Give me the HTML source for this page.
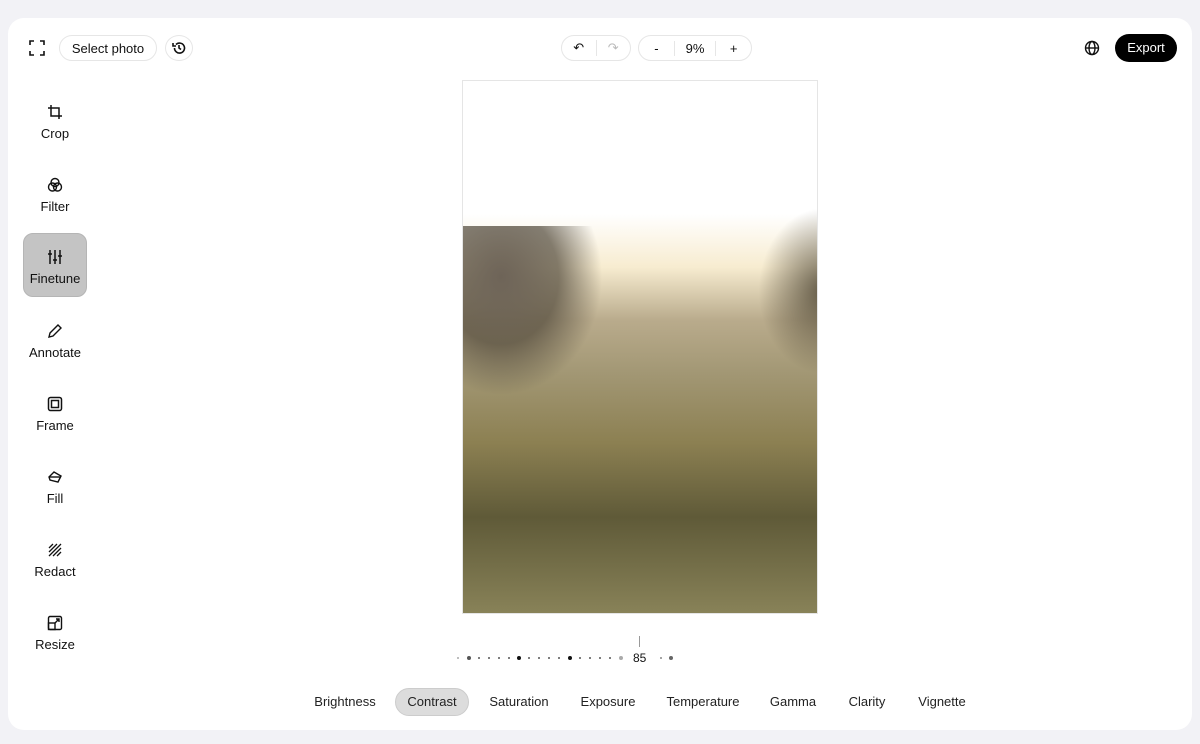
<!DOCTYPE html><html><head><style>
body{margin:0;width:1200px;height:744px;background:#f2f2f6;font-family:"Liberation Sans",sans-serif;position:relative;overflow:hidden;color:#111}
.card{position:absolute;left:8px;top:18px;width:1184px;height:712px;background:#fff;border-radius:16px}
.a{position:absolute}
.pill{position:absolute;border:1px solid #e6e6e6;border-radius:14px;height:26px;box-sizing:border-box;font-size:13px;display:flex;align-items:center;justify-content:center}
.tool{position:absolute;left:23px;width:64px;height:64px;text-align:center;font-size:13px;border-radius:10px}
.tool svg{display:block;margin:16px auto 6px}
.tab{position:absolute;top:688px;height:28px;line-height:28px;font-size:13px;color:#222;text-align:center}
.dot{position:absolute;border-radius:50%;background:#333}
.sd{position:absolute;top:657px;width:2px;height:2px;border-radius:50%;background:#555}
</style></head><body>
<div class="card"></div>
<svg class="a" style="left:29px;top:40px" width="16" height="16" fill="none" stroke="#111" stroke-width="1.6"><path d="M1 5V1h4M11 1h4v4M15 11v4h-4M5 15H1v-4"/></svg>
<div class="pill" style="left:59px;top:35px;width:98px">Select photo</div>
<div class="pill" style="left:165px;top:35px;width:28px;border-radius:50%"><svg width="14" height="14" fill="none" stroke="#111" stroke-width="1.6"><path d="M2.5 7a5 5 0 1 0 1.5-3.5"/><path d="M1 2v3h3" /><path d="M7 4v3l2 1.5"/></svg></div>
<div class="pill" style="left:561px;top:35px;width:70px"><span style="width:35px;text-align:center;border-right:1px solid #e6e6e6">↶</span><span style="width:35px;text-align:center;color:#bbb">↷</span></div>
<div class="pill" style="left:638px;top:35px;width:114px"><span style="width:36px;text-align:center;border-right:1px solid #e6e6e6">-</span><span style="width:42px;text-align:center;border-right:1px solid #e6e6e6">9%</span><span style="width:36px;text-align:center">+</span></div>
<svg class="a" style="left:1084px;top:40px" width="16" height="16" fill="none" stroke="#111" stroke-width="1.4"><circle cx="8" cy="8" r="6.5"/><ellipse cx="8" cy="8" rx="3" ry="6.5"/><path d="M1.5 8h13"/></svg>
<div class="a" style="left:1115px;top:34px;width:62px;height:28px;background:#000;color:#fff;border-radius:14px;font-size:13px;text-align:center;line-height:28px">Export</div>

<div class="tool" style="top:88px"><svg width="16" height="16" fill="none" stroke="#111" stroke-width="1.5"><path d="M4 1v11h11M1 4h11v11"/></svg>Crop</div>
<div class="tool" style="top:161px"><svg width="16" height="16" fill="none" stroke="#111" stroke-width="1.4"><circle cx="8" cy="5.5" r="4"/><circle cx="5.5" cy="10" r="4"/><circle cx="10.5" cy="10" r="4"/></svg>Filter</div>
<div class="tool" style="top:233px;background:#c4c4c4;border:1px solid #b5b5b5;box-sizing:border-box"><svg width="16" height="16" fill="none" stroke="#111" stroke-width="1.5" style="margin-top:15px"><path d="M3 1v14M8 1v14M13 1v14M1 5h4M6 11h4M11 7h4"/></svg>Finetune</div>
<div class="tool" style="top:307px"><svg width="16" height="16" fill="none" stroke="#111" stroke-width="1.4"><path d="M2 14l1-4 8-8 3 3-8 8z"/></svg>Annotate</div>
<div class="tool" style="top:380px"><svg width="16" height="16" fill="none" stroke="#111" stroke-width="1.5"><rect x="1.5" y="1.5" width="13" height="13" rx="2"/><rect x="4.5" y="4.5" width="7" height="7"/></svg>Frame</div>
<div class="tool" style="top:453px"><svg width="16" height="16" fill="none" stroke="#111" stroke-width="1.4"><path d="M2 8l5-5 7 4-3 6-8-2z"/><path d="M2 8h12"/></svg>Fill</div>
<div class="tool" style="top:526px"><svg width="16" height="16" fill="none" stroke="#111" stroke-width="1.3"><path d="M2 6l4-4M2 10l8-8M2 14l12-12M6 14l8-8M10 14l4-4"/></svg>Redact</div>
<div class="tool" style="top:599px"><svg width="16" height="16" fill="none" stroke="#111" stroke-width="1.4"><rect x="1.5" y="1.5" width="13" height="13" rx="1.5"/><rect x="1.5" y="8" width="6.5" height="6.5"/><path d="M8 8l4-4M9 4h3v3"/></svg>Resize</div>

<div class="a" style="left:462px;top:80px;width:356px;height:534px;border:1px solid #e5e5e5;box-sizing:border-box;overflow:hidden;background:linear-gradient(180deg,#fff 0%,#fff 25%,#f7ecd0 35%,#b9ab8c 45%,#a29774 55%,#8c8052 68%,#5f5a38 82%,#888258 100%)">
<div class="a" style="left:-30px;top:145px;width:170px;height:170px;background:radial-gradient(ellipse at 40% 30%,#6e6458 0%,rgba(80,72,58,.7) 40%,rgba(80,72,58,0) 70%)"></div>
<div class="a" style="left:290px;top:120px;width:100px;height:180px;background:radial-gradient(ellipse at 70% 50%,rgba(70,62,45,.8) 0%,rgba(70,62,45,0) 65%)"></div>
</div>

<div class="a" style="left:639px;top:636px;width:1px;height:11px;background:#999"></div>
<div class="a" style="left:633px;top:651px;font-size:12px">85</div>
<div class="sd" style="left:457px;background:#aaa"></div>
<div class="sd" style="left:478px"></div><div class="sd" style="left:488px"></div><div class="sd" style="left:498px"></div><div class="sd" style="left:508px"></div>
<div class="sd" style="left:528px"></div><div class="sd" style="left:538px"></div><div class="sd" style="left:548px"></div><div class="sd" style="left:558px"></div>
<div class="sd" style="left:579px"></div><div class="sd" style="left:589px"></div><div class="sd" style="left:599px"></div><div class="sd" style="left:609px"></div>
<div class="sd" style="left:660px;background:#888"></div>
<div class="dot" style="left:467px;top:656px;width:4px;height:4px;background:#555"></div>
<div class="dot" style="left:517px;top:656px;width:4px;height:4px;background:#111"></div>
<div class="dot" style="left:568px;top:656px;width:4px;height:4px;background:#111"></div>
<div class="dot" style="left:619px;top:656px;width:4px;height:4px;background:#aaa"></div>
<div class="dot" style="left:669px;top:656px;width:4px;height:4px;background:#666"></div>

<div class="tab" style="left:305px;width:80px">Brightness</div>
<div class="tab" style="left:395px;width:74px;background:#dcdcdc;border:1px solid #ccc;box-sizing:border-box;border-radius:14px;line-height:26px">Contrast</div>
<div class="tab" style="left:480px;width:78px">Saturation</div>
<div class="tab" style="left:570px;width:76px">Exposure</div>
<div class="tab" style="left:660px;width:86px">Temperature</div>
<div class="tab" style="left:762px;width:62px">Gamma</div>
<div class="tab" style="left:838px;width:58px">Clarity</div>
<div class="tab" style="left:908px;width:68px">Vignette</div>
</body></html>
